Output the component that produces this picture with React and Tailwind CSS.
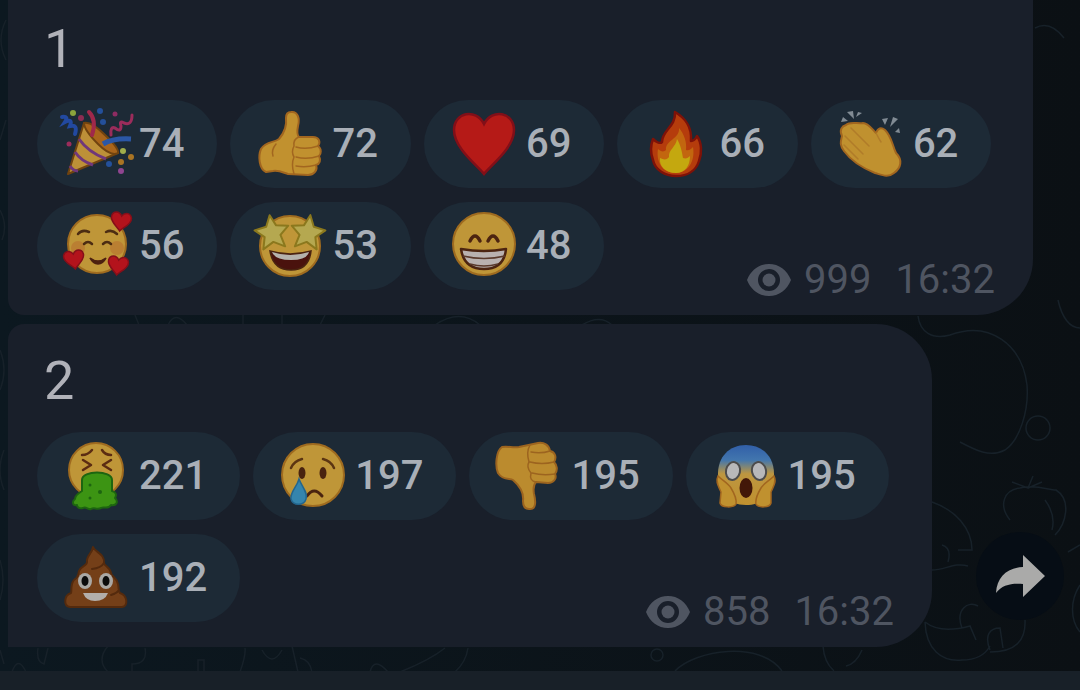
import React from 'react';

const heart = 'M0 10 C-3 6 -11 2 -10 -4 C-9 -9 -3 -10 0 -5 C3 -10 9 -9 10 -4 C11 2 3 6 0 10Z';
const star = 'M0 -17 L5 -6 L17 -4 L8 4 L11 16 L0 10 L-11 16 L-8 4 L-17 -4 L-5 -6Z';

function Face({ cx = 36, cy = 34, r = 31 }) {
  return <circle cx={cx} cy={cy} r={r} fill="#bf9638" stroke="#9f6b1f" strokeWidth="2" />;
}

function Party() {
  return (
    <>
      <path d="M7 66 L23 15 Q45 22 57 45 Z" fill="#bd9038" stroke="#70430f" strokeWidth="2" strokeLinejoin="round" />
      <path d="M23 15 Q30 13 44 27 Q58 40 57 45 Q50 49 37 36 Q23 22 23 15Z" fill="#a9651b" stroke="#70430f" strokeWidth="2" />
      <path d="M18 31 Q27 44 45 51 M14 44 Q20 53 32 57 M9 58 Q12 63 17 63" fill="none" stroke="#70377a" strokeWidth="3" />
      <path d="M31 27 Q36 12 28 4" fill="none" stroke="#a0284a" strokeWidth="4" strokeLinecap="round" />
      <path d="M42 36 Q52 30 70 31" fill="none" stroke="#2b57a6" strokeWidth="5" />
      <path d="M1 9 Q8 8 4 14 Q12 10 9 18 Q17 16 14 26" fill="none" stroke="#2249a0" strokeWidth="4" strokeLinecap="round" />
      <path d="M50 27 Q49 18 54 20 Q60 25 60 18 Q58 12 63 15 Q71 18 71 7" fill="none" stroke="#9b2c5b" strokeWidth="3" strokeLinecap="round" />
      <circle cx="12" cy="5" r="3" fill="#8ba33c" />
      <circle cx="39" cy="3" r="3" fill="#24509a" />
      <circle cx="42" cy="14" r="3" fill="#24509a" />
      <circle cx="20" cy="10" r="3" fill="#8d2c52" />
      <circle cx="54" cy="6" r="2.5" fill="#8d2c62" />
      <circle cx="8" cy="36" r="2.5" fill="#9b2c5b" />
      <circle cx="62" cy="43" r="3" fill="#a0ad4b" />
      <circle cx="60" cy="54" r="3" fill="#a97424" />
      <circle cx="70" cy="49" r="3" fill="#a97424" />
      <circle cx="48" cy="56" r="3" fill="#24509a" />
      <circle cx="60" cy="63" r="3" fill="#8f4590" />
    </>
  );
}

function ThumbUp() {
  return (
    <>
      <path
        d="M37 4 C44 3 46 11 44 18 C43 23 43 27 45 29 L59 29 C65 29 67 34 64 38 C68 41 67 46 65 48 C67 52 66 56 62 57 C64 62 60 67 54 67 L34 66 C28 64 24 62 19 63 L12 64 C5 61 4 48 7 41 C12 33 20 35 25 31 C31 24 33 18 32 10 C32 6 34 4 37 4Z"
        fill="#c1912f" stroke="#a2661f" strokeWidth="2" strokeLinejoin="round"
      />
      <path d="M45 29 Q39 31 40 38 Q37 44 40 49 Q37 56 40 66 M42 39 Q52 42 64 38 M42 49 Q53 52 65 48 M42 58 Q52 60 62 57 M22 36 Q17 42 19 48" fill="none" stroke="#a2661f" strokeWidth="1.5" strokeLinecap="round" />
    </>
  );
}

function ThumbDown() {
  return (
    <>
      <path
        d="M36 69 C43 70 43 62 41 54 C40 48 41 44 43 42 L55 43 C61 43 64 38 62 34 C65 30 64 25 61 22 C64 17 62 12 57 11 C56 5 51 2 45 3 L26 7 C20 8 15 6 9 7 C3 11 2 26 5 33 C10 41 17 38 20 40 C28 47 31 53 30 61 C30 66 32 69 36 69Z"
        fill="#bb8b2e" stroke="#9c641f" strokeWidth="2" strokeLinejoin="round"
      />
      <path d="M43 42 Q36 41 38 33 Q33 27 36 22 Q33 12 37 5 M39 33 Q50 36 62 34 M37 22 Q49 25 61 22 M38 12 Q48 14 57 11" fill="none" stroke="#9c641f" strokeWidth="1.5" strokeLinecap="round" />
    </>
  );
}

function Heart() {
  return (
    <path
      d="M36 66 C29 57 6 40 6 22 C6 4 28 0 36 16 C44 0 66 4 66 22 C66 40 43 57 36 66Z"
      fill="#b51a17" stroke="#820f18" strokeWidth="2.5"
    />
  );
}

function Fire() {
  return (
    <>
      <path
        d="M34 4 C44 10 51 18 50 33 C53 33 55 30 56 28 C61 35 61 45 58 53 C55 63 46 68 35 68 C24 68 14 62 12 52 C9 44 10 36 12 31 C15 34 19 36 21 34 C21 22 35 19 34 4Z"
        fill="#b53c0c" stroke="#7e1208" strokeWidth="2.5" strokeLinejoin="round"
      />
      <path d="M38 20 C43 26 46 34 45 42 C48 43 50 41 52 39 C54 50 50 64 35 65 C20 65 15 52 17 41 C20 44 23 44 25 42 C24 32 39 31 38 20Z" fill="#c2660f" />
      <path d="M36 31 C40 38 41 44 42 50 C45 51 47 50 49 48 C49 58 44 65 35 65 C24 65 18 58 19 50 C23 52 26 52 28 49 C27 42 35 39 36 31Z" fill="#c4a80f" />
    </>
  );
}

function Clap() {
  return (
    <>
      <path
        d="M11 17 C15 13 23 16 28 15 C33 15 37 21 41 25 C43 20 46 19 50 22 C57 29 57 37 61 45 C68 52 66 60 59 65 C53 70 47 67 40 65 C30 61 17 54 9 43 C4 36 6 33 7 28 C4 22 7 18 11 17Z"
        fill="#c0912f" stroke="#a2661f" strokeWidth="2" strokeLinejoin="round"
      />
      <path d="M41 25 Q44 31 46 34 M16 20 L34 38 M10 28 L28 46 M9 37 L23 51" fill="none" stroke="#b07c29" strokeWidth="1.5" strokeLinecap="round" />
      <path d="M6 14 L8 9 L13 13Z M12 4 L19 11 L18 3Z M21 9 L27 5 L23 4Z M47 11 L53 10 L50 17Z M55 19 L58 9 L63 11Z M60 24 L64 20 L65 25Z" fill="#818b94" />
    </>
  );
}

function InLove() {
  return (
    <>
      <Face cy={34} r={29} />
      <circle cx="17" cy="38" r="7" fill="#b8702f" opacity="0.6" />
      <circle cx="56" cy="38" r="7" fill="#b8702f" opacity="0.6" />
      <path d="M17 24 Q21 19 28 22 M45 22 Q51 19 56 24 M23 34 Q27 30 31 34 M42 34 Q46 30 50 34" fill="none" stroke="#4c2c12" strokeWidth="2.5" strokeLinecap="round" />
      <path d="M29 48 Q37 54 45 48 Q42 54 37 54 Q32 54 29 48Z" fill="#4c2010" stroke="#4c2010" strokeWidth="1.5" />
      <g fill="#b3131c" stroke="#850f19" strokeWidth="1.5">
        <path d={heart} transform="translate(60 11) rotate(8)" />
        <path d={heart} transform="translate(13 49) rotate(-8)" />
        <path d={heart} transform="translate(57 55) rotate(8)" />
      </g>
    </>
  );
}

function StarStruck() {
  return (
    <>
      <Face cy={36} r={30} />
      <path d="M16 41 Q36 47 57 41 Q55 60 37 60 Q19 60 16 41Z" fill="#4a120d" stroke="#4a2410" strokeWidth="1.5" />
      <path d="M18 42 Q36 48 55 42 Q53 50 37 50 Q21 50 18 42Z" fill="#b5b2ac" />
      <g fill="#b5a850" stroke="#8b781d" strokeWidth="2" strokeLinejoin="round">
        <path d={star} transform="translate(18 22) rotate(-8)" />
        <path d={star} transform="translate(54 22) rotate(8)" />
      </g>
    </>
  );
}

function Grin() {
  return (
    <>
      <Face cy={34} r={31} />
      <path d="M22 31 Q27 21 32 31 M40 31 Q45 21 50 31" fill="none" stroke="#4c2410" strokeWidth="3.5" strokeLinecap="round" />
      <path d="M13 39 Q36 43 58 39 Q56 59 36 59 Q16 59 13 39Z" fill="#b9b1af" stroke="#4c2410" strokeWidth="2.5" strokeLinejoin="round" />
      <path d="M15 46 Q36 51 57 46 M22 54 Q36 58 50 54" fill="none" stroke="#5a3a2c" strokeWidth="1.5" />
    </>
  );
}

function Vomit() {
  return (
    <>
      <Face cx={35} cy={30} r={27} />
      <path d="M21 15 Q27 15 31 10 M41 10 Q44 15 50 15 M22 20 L30 25 L22 30 M50 20 L42 25 L50 30" fill="none" stroke="#5b2c12" strokeWidth="2.5" strokeLinecap="round" strokeLinejoin="round" />
      <path
        d="M21 40 C21 30 51 30 51 40 L51 51 C55 52 56 55 54 58 C58 62 55 66 50 65 C47 70 43 66 40 68 C36 70 33 67 30 69 C27 70 25 66 22 68 C18 69 16 67 16 65 C11 66 11 61 14 59 C14 55 18 53 21 51Z"
        fill="#3c9413" stroke="#1d6510" strokeWidth="2" strokeLinejoin="round"
      />
      <circle cx="29" cy="45" r="1.5" fill="#1d6510" />
      <circle cx="39" cy="52" r="2" fill="#1d6510" />
      <circle cx="29" cy="58" r="1.5" fill="#1d6510" />
    </>
  );
}

function Cry() {
  return (
    <>
      <Face cy={35} r={31} />
      <path d="M14 28 Q17 21 25 19 M46 19 Q54 21 57 28" fill="none" stroke="#5b3512" strokeWidth="2.5" strokeLinecap="round" />
      <ellipse cx="25" cy="33" rx="3.5" ry="6" fill="#49230f" />
      <ellipse cx="46" cy="33" rx="3.5" ry="6" fill="#49230f" />
      <path d="M30 56 Q37 46 45 56" fill="none" stroke="#49230f" strokeWidth="3" strokeLinecap="round" />
      <path d="M22 39 C25 47 31 52 29 59 C27 66 16 66 14 59 C13 52 20 47 22 39Z" fill="#3585ad" stroke="#23668e" strokeWidth="1.5" />
    </>
  );
}

function Scream() {
  return (
    <>
      <defs>
        <linearGradient id="cold" x1="0" y1="0" x2="0" y2="1">
          <stop offset="0" stopColor="#315fa8" />
          <stop offset="0.25" stopColor="#4276ae" />
          <stop offset="0.48" stopColor="#bd9640" />
          <stop offset="1" stopColor="#c0912f" />
        </linearGradient>
      </defs>
      <path d="M36 5 C53 5 64 17 64 34 C64 52 54 65 36 65 C18 65 8 52 8 34 C8 17 19 5 36 5Z" fill="url(#cold)" />
      <ellipse cx="23" cy="31" rx="7" ry="9" fill="#b8b8ba" stroke="#4d4c4c" strokeWidth="2" transform="rotate(12 23 31)" />
      <ellipse cx="49" cy="31" rx="7" ry="9" fill="#b8b8ba" stroke="#4d4c4c" strokeWidth="2" transform="rotate(-12 49 31)" />
      <ellipse cx="36" cy="48" rx="6.5" ry="10" fill="#421708" />
      <path d="M8 36 C5 42 9 47 11 52 L10 63 C11 68 24 68 26 64 C27 59 24 53 21 48 C18 43 13 41 8 36Z" fill="#c0912f" stroke="#a2661f" strokeWidth="1.5" />
      <path d="M64 36 C67 42 63 47 61 52 L61 63 C60 68 48 68 46 64 C45 59 48 53 51 48 C54 43 59 41 64 36Z" fill="#c0912f" stroke="#a2661f" strokeWidth="1.5" />
    </>
  );
}

function Poop() {
  return (
    <>
      <path
        d="M32 5 C34 10 44 12 43 21 C43 24 49 25 50 31 C50 34 56 36 57 42 C58 46 57 49 59 51 C66 53 68 64 61 65 L9 65 C2 64 3 53 10 51 C11 49 9 43 13 38 C18 35 17 33 18 29 C20 24 26 24 26 20 C25 14 31 12 32 5Z"
        fill="#743f18" stroke="#542a0d" strokeWidth="2" strokeLinejoin="round"
      />
      <path d="M43 21 Q40 26 31 27 M57 49 Q56 51 50 53" fill="none" stroke="#542a0d" strokeWidth="2" strokeLinecap="round" />
      <ellipse cx="24" cy="39" rx="7" ry="8" fill="#aaa8a4" />
      <ellipse cx="45" cy="39" rx="7" ry="8" fill="#aaa8a4" />
      <ellipse cx="24" cy="39" rx="3.5" ry="5" fill="#0b0b0b" />
      <ellipse cx="45" cy="39" rx="3.5" ry="5" fill="#0b0b0b" />
      <path d="M22 51 L47 51 Q44 59 34 59 Q25 59 22 51Z" fill="#b3aeaa" />
    </>
  );
}

const messages = [
  {
    text: '1',
    views: 999,
    time: '16:32',
    shape: 'max-w-[1025px] pt-[17px] rounded-br-[56px] rounded-bl-[16px]',
    reactions: [
      { name: 'Party popper', Icon: Party, count: 74 },
      { name: 'Thumbs up', Icon: ThumbUp, count: 72 },
      { name: 'Heart', Icon: Heart, count: 69 },
      { name: 'Fire', Icon: Fire, count: 66 },
      { name: 'Clapping hands', Icon: Clap, count: 62 },
      { name: 'Smiling face with hearts', Icon: InLove, count: 56 },
      { name: 'Star-struck', Icon: StarStruck, count: 53 },
      { name: 'Beaming face', Icon: Grin, count: 48 },
    ],
  },
  {
    text: '2',
    views: 858,
    time: '16:32',
    shape: 'max-w-[924px] pt-[25px] rounded-r-[56px] rounded-tl-[16px]',
    share: true,
    reactions: [
      { name: 'Vomiting face', Icon: Vomit, count: 221 },
      { name: 'Crying face', Icon: Cry, count: 197 },
      { name: 'Thumbs down', Icon: ThumbDown, count: 195 },
      { name: 'Screaming face', Icon: Scream, count: 195 },
      { name: 'Pile of poo', Icon: Poop, count: 192 },
    ],
  },
];

function Reaction({ name, Icon, count }) {
  return (
    <button
      type="button"
      aria-label={`${name} ${count}`}
      className="flex h-[88px] items-center gap-[6px] rounded-full bg-[#1d2a36] pl-6 pr-[33px] text-[40px] leading-[48px] font-medium text-[#a9afb7]"
    >
      <svg viewBox="0 0 72 72" className="h-[72px] w-[72px] shrink-0 overflow-visible" aria-hidden="true">
        <Icon />
      </svg>
      <span>{count}</span>
    </button>
  );
}

function Meta({ views, time }) {
  return (
    <div className="-mb-[14px] ml-auto flex items-center self-end text-[40px] leading-[48px] text-[#4f5561]">
      <svg viewBox="0 0 44 34" className="mr-[13px] h-[34px] w-11" aria-hidden="true">
        <path
          fillRule="evenodd"
          d="M22 1 C32 1 40 7 44 17 C40 27 32 33 22 33 C12 33 4 27 0 17 C4 7 12 1 22 1Z M22 6 A11 11 0 1 0 22 28 A11 11 0 1 0 22 6Z"
          fill="currentColor"
        />
        <circle cx="22" cy="17" r="6.5" fill="currentColor" />
      </svg>
      <span>{views}</span>
      <time className="ml-6">{time}</time>
    </div>
  );
}

function Message({ text, views, time, shape, share, reactions }) {
  return (
    <div className="flex items-end">
      <article className={`w-full bg-[#191f2a] pb-[25px] pl-[29px] pr-[38px] ${shape}`}>
        <p className="mb-[19px] pl-[7px] text-[54px] leading-[64px] text-[#b1b2b9]">{text}</p>
        <div className="flex flex-wrap gap-x-[13px] gap-y-[14px]">
          {reactions.map((r) => (
            <Reaction key={r.name} {...r} />
          ))}
          <Meta views={views} time={time} />
        </div>
      </article>

      {share && (
        <button
          type="button"
          aria-label="Share"
          className="mr-4 mb-[27px] ml-auto flex h-[88px] w-[88px] shrink-0 items-center justify-center rounded-full bg-[#060d15]"
        >
          <svg viewBox="0 0 50 44" className="h-11 w-[50px]" aria-hidden="true">
            <path d="M28 1 L50 22 L28 43 L28 30 C16 29 7 31 1 39 C2 23 12 14 28 13Z" fill="#aaaaa9" />
          </svg>
        </button>
      )}
    </div>
  );
}

// Faint doodles of the chat wallpaper
function Wallpaper() {
  return (
    <svg className="absolute top-0 left-0 h-[690px] w-[1080px]" viewBox="0 0 1080 690" fill="none" stroke="#172129" strokeWidth="1.5" aria-hidden="true">
      <path d="M918 316 C920 332 932 340 950 335 C990 320 1022 345 1027 385 C1029 410 1020 440 1005 450 C990 458 975 450 960 442" />
      <circle cx="1038" cy="428" r="12" />
      <path d="M1010 520 C998 505 1004 490 1020 488 C1036 484 1048 490 1056 490 C1072 500 1066 524 1055 535 M1012 482 L1028 488 L1033 476 M1028 488 L1042 482 M1045 500 Q1056 515 1052 530" />
      <path d="M932 502 C955 510 972 528 972 550 L958 550 M932 570 C945 570 955 562 968 566 M942 545 Q952 548 948 562" />
      <path d="M925 622 C926 650 942 662 962 660 C975 660 985 655 990 646 M962 628 C955 610 968 600 978 606 M925 622 Q940 634 970 626 L976 640 M990 650 C984 635 990 628 1000 628 L1003 648 M1025 620 C1026 640 1016 652 990 652" />
      <path d="M1058 300 C1062 318 1070 328 1080 328 M1035 28 Q1050 20 1064 38" />
      <path d="M1080 545 L1068 552 M1080 585 C1070 600 1070 620 1080 632" />
      <path d="M135 315 L139 325 M168 325 Q175 310 187 325 M243 315 V325 M282 315 V325 M325 315 L320 325 M435 325 Q460 308 480 325 M582 325 Q600 314 612 325" />
      <path d="M0 650 L4 664 M12 672 Q18 655 26 672 M38 648 Q36 662 44 664 L48 648 M108 646 Q96 660 108 672 M145 648 Q148 664 132 664 V672 M198 672 V660 H204 V672 M240 672 Q246 655 245 648 M262 650 Q272 668 282 650 M292 646 L298 672 M300 658 Q310 660 312 672 M370 672 Q374 656 388 672 M400 672 Q430 660 445 648 M468 648 Q466 662 455 672" />
      <circle cx="657" cy="655" r="6" />
      <path d="M675 671 C695 650 760 640 782 671 M823 646 Q824 662 834 671 M862 650 Q856 664 846 666" />
      <path d="M6 20 Q-4 40 6 60 M6 120 L0 140 M0 210 Q8 225 2 240 M0 350 Q8 370 0 390 M4 450 Q-4 470 4 490 M0 560 Q6 580 0 600" />
    </svg>
  );
}

export default function App() {
  return (
    <div className="relative flex min-h-screen flex-col overflow-hidden bg-linear-to-r from-[#0c1820] to-[#0b1014] font-[Roboto,sans-serif]">
      <Wallpaper />
      <main className="relative flex flex-col gap-[9px] pb-6 pl-2">
        {messages.map((m) => (
          <Message key={m.text} {...m} />
        ))}
      </main>
      <footer className="relative mt-auto h-[19px] bg-[#182028]" />
    </div>
  );
}
